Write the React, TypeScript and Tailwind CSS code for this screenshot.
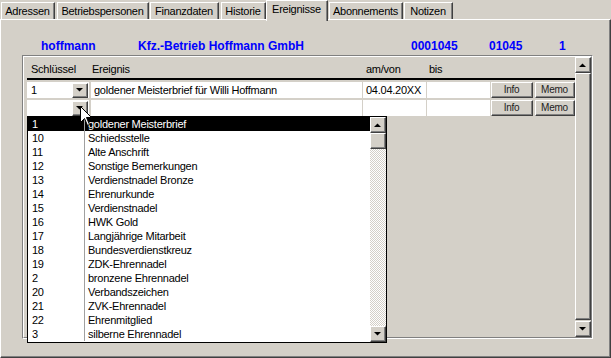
import type { ReactNode } from "react";

const tabs = [
  { label: "Adressen", cls: "w-[54px] ml-[1px]" },
  { label: "Betriebspersonen", cls: "w-[92px] ml-[2px]" },
  { label: "Finanzdaten", cls: "w-[69px] ml-[1px]" },
  { label: "Historie", cls: "w-[45px] ml-[2px]" },
  { label: "Ereignisse", cls: "w-[62px]", active: true },
  { label: "Abonnements", cls: "w-[74px] ml-[1px]" },
  { label: "Notizen", cls: "w-[49px] ml-[1px]" },
];

const options: [string, string][] = [
  ["1", "goldener Meisterbrief"],
  ["10", "Schiedsstelle"],
  ["11", "Alte Anschrift"],
  ["12", "Sonstige Bemerkungen"],
  ["13", "Verdienstnadel Bronze"],
  ["14", "Ehrenurkunde"],
  ["15", "Verdienstnadel"],
  ["16", "HWK Gold"],
  ["17", "Langjährige Mitarbeit"],
  ["18", "Bundesverdienstkreuz"],
  ["19", "ZDK-Ehrennadel"],
  ["2", "bronzene Ehrennadel"],
  ["20", "Verbandszeichen"],
  ["21", "ZVK-Ehrennadel"],
  ["22", "Ehrenmitglied"],
  ["3", "silberne Ehrennadel"],
];

function Raised({ className = "", children }: { className?: string; children?: ReactNode }) {
  return (
    <div className={`shrink-0 bg-[#d4d0c8] border border-t-white border-l-white border-r-[#404040] border-b-[#404040] ${className}`}>
      <div className="w-full h-full border-r border-b border-[#808080] flex items-center justify-center">
        {children}
      </div>
    </div>
  );
}

function Arrow({ up }: { up?: boolean }) {
  return (
    <svg width="7" height="4" viewBox="0 0 7 4">
      <polygon points={up ? "0,4 7,4 3.5,0.5" : "0,0 7,0 3.5,3.5"} fill="#000" />
    </svg>
  );
}

function GridRow({ keyVal, text, date }: { keyVal: string; text: string; date: string }) {
  return (
    <div className="flex h-[16px] mt-[2px]">
      <div className="w-[62px] mr-[2px] bg-white flex items-center">
        <span className="pl-[4px] flex-1">{keyVal}</span>
        <Raised className="w-[16px] h-[15px] mr-[1px] mt-[1px]">
          <Arrow />
        </Raised>
      </div>
      <div className="w-[271px] mr-[1px] bg-white pl-[3px] leading-[16px]">{text}</div>
      <div className="w-[63px] mr-[1px] bg-white pl-[3px] leading-[16px]">{date}</div>
      <div className="w-[63px] mr-[1px] bg-white" />
      <Raised className="w-[42px] h-[16px] mr-[2px] text-[10px] text-[#222]">Info</Raised>
      <Raised className="w-[40px] h-[16px] text-[10px] text-[#222]">Memo</Raised>
    </div>
  );
}

export default function App() {
  return (
    <div className="w-[611px] h-[358px] bg-[#d4d0c8] relative overflow-hidden font-['Liberation_Sans',Arial,sans-serif] text-[11px] tracking-[-0.25px] text-black">
      <div className="flex items-end h-[19px]">
        {tabs.map((t) =>
          t.active ? (
            <div
              key={t.label}
              className={`${t.cls} h-[21px] -mb-[2px] relative z-10 bg-[#d4d0c8] border-t border-l border-t-white border-l-white border-r border-r-[#404040] flex`}
            >
              <div className="flex-1 border-r border-[#808080] text-center leading-[17px]">{t.label}</div>
            </div>
          ) : (
            <div
              key={t.label}
              className={`${t.cls} h-[17px] bg-[#d4d0c8] border-t border-l border-t-white border-l-white border-r border-r-[#404040] flex`}
            >
              <div className="flex-1 border-r border-[#808080] text-center leading-[17px]">{t.label}</div>
            </div>
          )
        )}
      </div>

      <div className="h-[339px] border border-t-white border-l-white border-r-[#404040] border-b-[#404040]">
        <div className="h-full border-r border-b border-[#808080] flex flex-col">
          <div className="flex mt-[19px] h-[14px] leading-[14px] text-[12px] font-bold tracking-normal text-[#0000ff]">
            <div className="w-[137px] pl-[40px]">hoffmann</div>
            <div className="w-[273px]">Kfz.-Betrieb Hoffmann GmbH</div>
            <div className="w-[78px]">0001045</div>
            <div className="w-[70px]">01045</div>
            <div>1</div>
          </div>

          <div className="ml-[21px] mt-[2px] w-[571px] h-[284px] border-t border-l border-t-[#808080] border-l-[#808080] border-r border-b border-r-white border-b-white">
            <div className="h-full border-t border-l border-t-white border-l-white border-r border-b border-r-[#808080] border-b-[#808080] flex">
              <div className="flex-1 pl-[3px]">
                <div className="w-[548px] h-[23px] border-b-2 border-black flex items-center pt-[3px]">
                  <div className="w-[64px] pl-[4px]">Schlüssel</div>
                  <div className="w-[272px] pl-[1px]">Ereignis</div>
                  <div className="w-[64px] pl-[3px]">am/von</div>
                  <div className="pl-[2px]">bis</div>
                </div>
                <GridRow keyVal="1" text="goldener Meisterbrief für Willi Hoffmann" date="04.04.20XX" />
                <GridRow keyVal="" text="" date="" />
              </div>
              <div className="w-[16px] flex flex-col">
                <Raised className="h-[16px]">
                  <Arrow up />
                </Raised>
                <Raised className="flex-1" />
                <Raised className="h-[16px] mt-[1px]">
                  <Arrow />
                </Raised>
              </div>
            </div>
          </div>
        </div>
      </div>

      <div className="absolute left-[27px] top-[116px] w-[360px] h-[227px] border border-black bg-white flex z-20">
        <div className="flex-1">
          {options.map(([k, v], i) => (
            <div key={k} className={`flex h-[14px] leading-[14px] ${i === 0 ? "bg-black text-white" : ""}`}>
              <div className="w-[57px] pl-[4px] border-r border-[#a0a0a0]">{k}</div>
              <div className="pl-[3px]">{v}</div>
            </div>
          ))}
        </div>
        <div className="w-[16px] flex flex-col">
          <Raised className="h-[16px]">
            <Arrow up />
          </Raised>
          <Raised className="h-[16px]" />
          <div className="flex-1 bg-[repeating-conic-gradient(#d4d0c8_0%_25%,#ffffff_0%_50%)] bg-size-[2px_2px]" />
          <Raised className="h-[16px]">
            <Arrow />
          </Raised>
        </div>
      </div>

      <svg className="absolute left-[80px] top-[106px] z-30" width="13" height="21" viewBox="0 0 13 21">
        <polygon
          points="0.5,0.5 0.5,16.5 4.5,12.5 7.5,19.5 9.5,18.5 6.5,11.5 11.5,11.5"
          fill="#fff"
          stroke="#000"
          strokeWidth="1"
        />
      </svg>
    </div>
  );
}
